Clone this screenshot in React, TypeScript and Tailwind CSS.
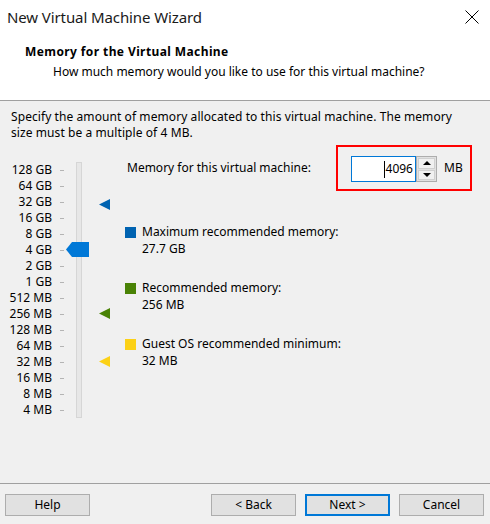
import React from "react";

const labels = [
  "128 GB", "64 GB", "32 GB", "16 GB", "8 GB", "4 GB", "2 GB", "1 GB",
  "512 MB", "256 MB", "128 MB", "64 MB", "32 MB", "16 MB", "8 MB", "4 MB",
];

function Marker({ color, top }: { color: string; top: string }) {
  return (
    <svg className={`absolute left-[99px] ${top}`} width="11" height="11" viewBox="0 0 11 11">
      <polygon points="0,5.5 11,0 11,11" fill={color} />
    </svg>
  );
}

function Legend({ color, title, value }: { color: string; title: string; value: string }) {
  return (
    <div className="flex">
      <div className={`w-[11px] h-[11px] mt-[4px] ${color}`} />
      <div className="ml-[6px] leading-[17px]">
        <div>{title}</div>
        <div>{value}</div>
      </div>
    </div>
  );
}

export default function App() {
  return (
    <div
      className="w-[490px] h-[524px] bg-[#f0f0f0] flex flex-col text-[12px] text-black overflow-hidden"
      style={{ fontFamily: '"Noto Sans", "Open Sans", sans-serif' }}
    >
      {/* Header */}
      <div className="bg-white h-[101px] border-b border-[#a0a0a0] flex flex-col">
        <div className="flex justify-between items-start pl-[7px] pt-[7px] pr-[11px]">
          <div className="text-[15px] leading-[20px] text-[#1a1a1a] tracking-[-0.1px]">New Virtual Machine Wizard</div>
          <svg width="14" height="14" viewBox="0 0 14 14" className="mt-[3px]">
            <path d="M0.5 0.5 L13.5 13.5 M13.5 0.5 L0.5 13.5" stroke="#000" strokeWidth="1" />
          </svg>
        </div>
        <div className="pl-[25px] mt-[17px] font-bold leading-[16px] tracking-[0.4px]">Memory for the Virtual Machine</div>
        <div className="pl-[53px] mt-[4px] leading-[16px]">How much memory would you like to use for this virtual machine?</div>
      </div>

      {/* Body */}
      <div className="px-[11px] pt-[8px] leading-[16px] tracking-[0.08px] whitespace-nowrap">
        Specify the amount of memory allocated to this virtual machine. The memory
        <br />
        size must be a multiple of 4 MB.
      </div>

      <div className="flex mt-[4px]">
        {/* Slider */}
        <div className="w-[125px] pt-[17px]">
          <div className="relative h-[256px]">
            <div className="flex flex-col">
              {labels.map((l) => (
                <div key={l} className="flex items-center h-[16px]">
                  <div className="w-[52px] text-right whitespace-nowrap leading-[16px]">{l}</div>
                  <div className="ml-[8px] w-[4px] h-[1px] bg-[#b4b4b4]" />
                </div>
              ))}
            </div>
            <div className="absolute left-[76px] top-0 w-[6px] h-[256px] bg-[#e7e7e7] border border-[#d6d6d6]" />
            <svg className="absolute left-[66px] top-[80px]" width="23" height="15" viewBox="0 0 23 15">
              <polygon points="0,7.5 6,0 23,0 23,15 6,15" fill="#0078d7" />
            </svg>
            <Marker color="#0063b1" top="top-[37px]" />
            <Marker color="#498205" top="top-[146px]" />
            <Marker color="#fcd116" top="top-[194px]" />
          </div>
        </div>

        {/* Right side */}
        <div className="flex flex-col">
          <div className="flex items-center h-[46px]">
            <div className="w-[211px] pl-[2px]">Memory for this virtual machine:</div>
            <div className="w-[136px] h-[46px] border-2 border-[#ff0000] flex items-center pl-[13px]">
              <div className="w-[65px] h-[26px] bg-white border border-[#0078d7] flex items-center justify-end pr-[2px] mt-[2px]">
                <div className="h-[17px] w-[1px] bg-black mr-[1px]" />
                <span className="leading-[16px]">4096</span>
              </div>
              <div className="w-[21px] h-[26px] border border-[#adadad] bg-[#e1e1e1] flex flex-col mt-[2px] p-[1px] gap-[1px]">
                <div className="flex-1 flex items-center justify-center bg-[#f0f0f0] border border-[#d0d0d0]">
                  <svg width="8" height="4" viewBox="0 0 8 4"><polygon points="4,0 8,4 0,4" fill="#000" /></svg>
                </div>
                <div className="flex-1 flex items-center justify-center bg-[#f0f0f0] border border-[#d0d0d0]">
                  <svg width="8" height="4" viewBox="0 0 8 4"><polygon points="0,0 8,0 4,4" fill="#000" /></svg>
                </div>
              </div>
              <div className="ml-[7px]">MB</div>
            </div>
          </div>

          <div className="mt-[32px] flex flex-col gap-[22px]">
            <Legend color="bg-[#0063b1]" title="Maximum recommended memory:" value="27.7 GB" />
            <Legend color="bg-[#498205]" title="Recommended memory:" value="256 MB" />
            <Legend color="bg-[#fcd116]" title="Guest OS recommended minimum:" value="32 MB" />
          </div>
        </div>
      </div>

      <div className="flex-1" />

      {/* Footer */}
      <div className="border-t border-[#a0a0a0] pt-[10px] pb-[8px] pl-[5px] pr-[6px] flex">
        <button className="w-[85px] h-[22px] bg-[#e1e1e1] border border-[#adadad] leading-[20px]">Help</button>
        <div className="flex-1" />
        <button className="w-[85px] h-[22px] bg-[#e1e1e1] border border-[#adadad] leading-[20px]">&lt; Back</button>
        <button className="w-[85px] h-[22px] bg-[#e1e1e1] border-2 border-[#0078d7] leading-[18px] ml-[9px]">Next &gt;</button>
        <button className="w-[85px] h-[22px] bg-[#e1e1e1] border border-[#adadad] leading-[20px] ml-[9px]">Cancel</button>
      </div>
    </div>
  );
}
